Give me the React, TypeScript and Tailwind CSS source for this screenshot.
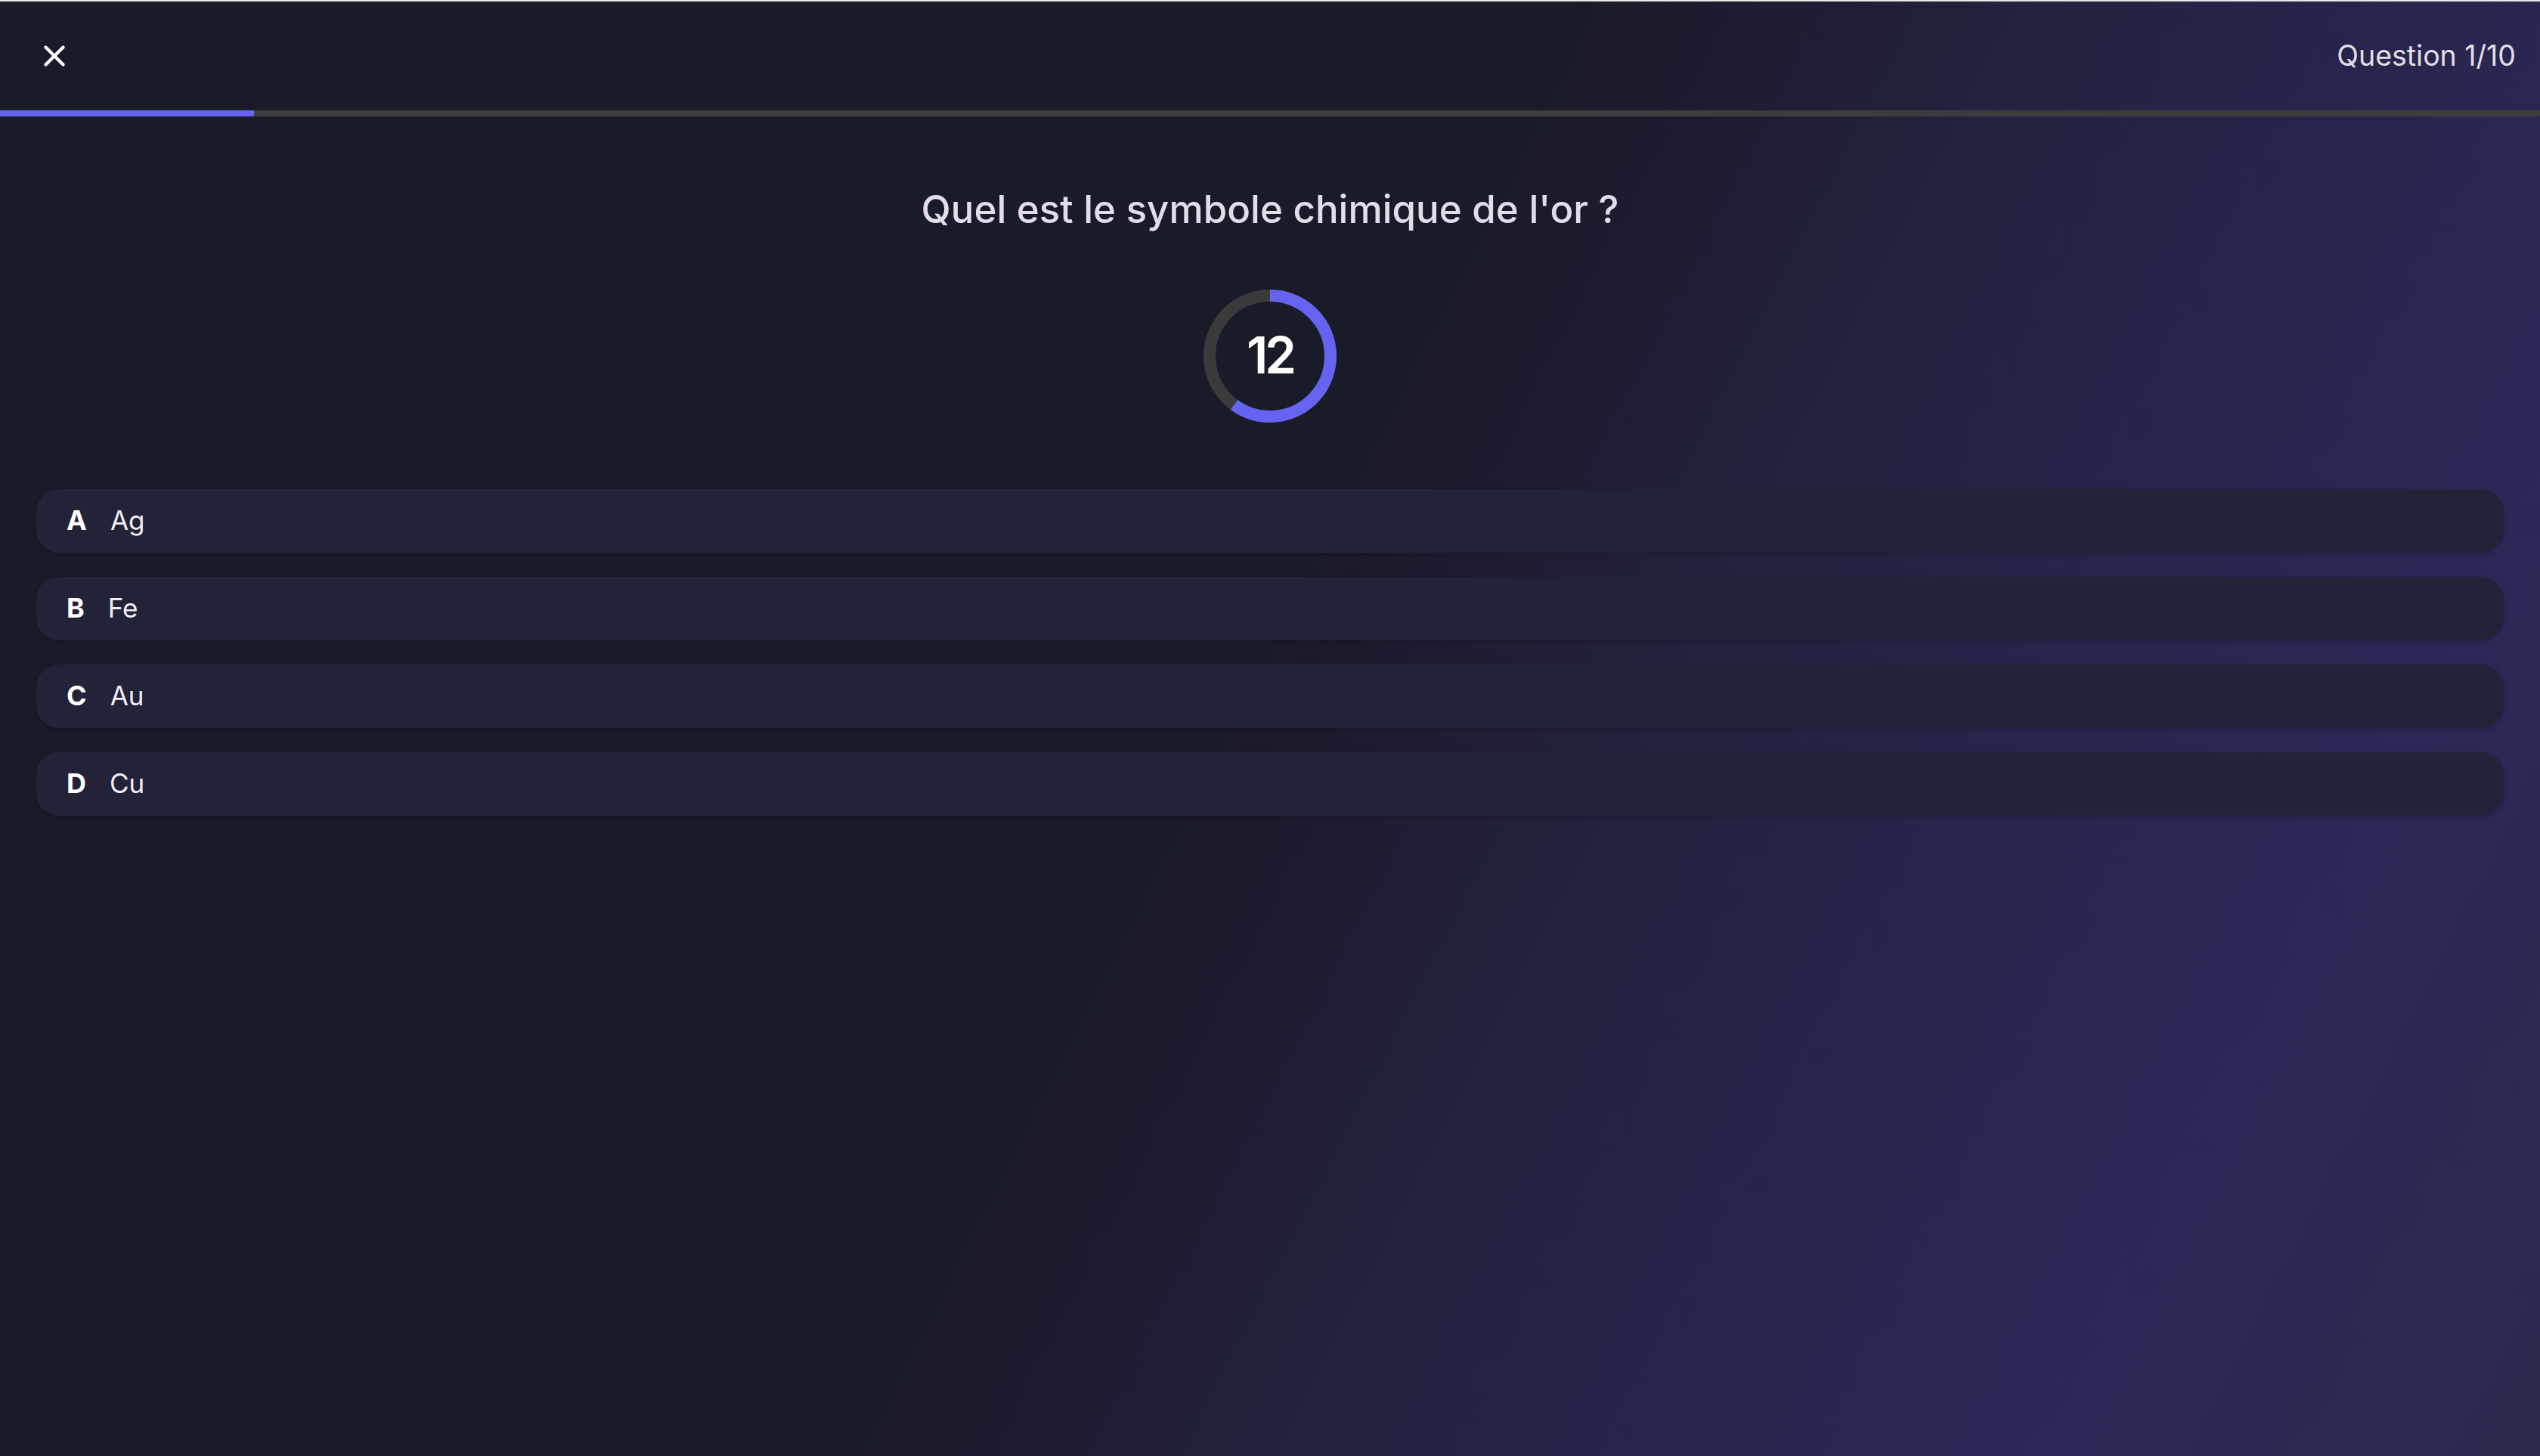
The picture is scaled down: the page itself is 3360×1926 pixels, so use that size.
import React from 'react';

const answers = [
  { letter: 'A', label: 'Ag' },
  { letter: 'B', label: 'Fe' },
  { letter: 'C', label: 'Au' },
  { letter: 'D', label: 'Cu' },
];

function Timer({ value, total }: { value: number; total: number }) {
  const r = 80;
  const c = 2 * Math.PI * r;
  const done = (value / total) * c;

  return (
    <div className="relative h-[176px] w-[176px]">
      <svg width="176" height="176" viewBox="0 0 176 176" className="-rotate-90">
        <circle cx="88" cy="88" r={r} fill="none" stroke="#3a3a3a" strokeWidth="16" />
        <circle
          cx="88"
          cy="88"
          r={r}
          fill="none"
          stroke="#6563f0"
          strokeWidth="16"
          strokeDasharray={`${done} ${c}`}
        />
      </svg>
      <span className="absolute inset-0 flex items-center justify-center pb-[3px] text-[67px] font-semibold leading-none tracking-[-4px] text-white">
        {value}
      </span>
    </div>
  );
}

export default function App() {
  return (
    <div className="flex min-h-screen w-full flex-col border-t-2 border-[#e6e6e6] bg-[linear-gradient(117deg,#191b28_0%,#191b28_48%,#1d1a2b_51%,#23223f_62%,#2b2858_84%,#2a2a4c_100%)] font-['Inter',sans-serif]">
      {/* Header */}
      <header className="flex h-[144px] items-center justify-between pl-[58px] pr-8">
        <button className="flex h-[28px] w-[28px] items-center justify-center text-white">
          <svg width="28" height="28" viewBox="0 0 28 28" fill="none" stroke="currentColor" strokeWidth="4.2" strokeLinecap="round">
            <path d="M2.5 2.5 L25.5 25.5" />
            <path d="M25.5 2.5 L2.5 25.5" />
          </svg>
        </button>
        <span className="text-[37.5px] font-normal text-[#e2dde8]">Question 1/10</span>
      </header>

      {/* Progress */}
      <div className="h-2 w-full bg-[#3d3d3d]">
        <div className="h-full w-[10%] bg-[#6563f0]" />
      </div>

      <main className="flex flex-col items-center px-12">
        <h1 className="mt-[93px] text-center text-[51px] font-medium leading-[60px] text-[#e3dde9]">
          Quel est le symbole chimique de l'or ?
        </h1>

        <div className="mt-[76px]">
          <Timer value={12} total={20} />
        </div>

        <div className="mt-[88px] flex w-full flex-col gap-8">
          {answers.map((a) => (
            <button
              key={a.letter}
              className="flex h-[84px] w-full items-center gap-[31px] rounded-[30px] bg-[#222339] pb-[2px] pl-10 text-left shadow-[0_2px_6px_rgba(0,0,0,0.18)]"
            >
              <span className="text-[36px] font-bold text-white">{a.letter}</span>
              <span className="text-[35px] font-normal text-[#f1eef5]">{a.label}</span>
            </button>
          ))}
        </div>
      </main>
    </div>
  );
}
